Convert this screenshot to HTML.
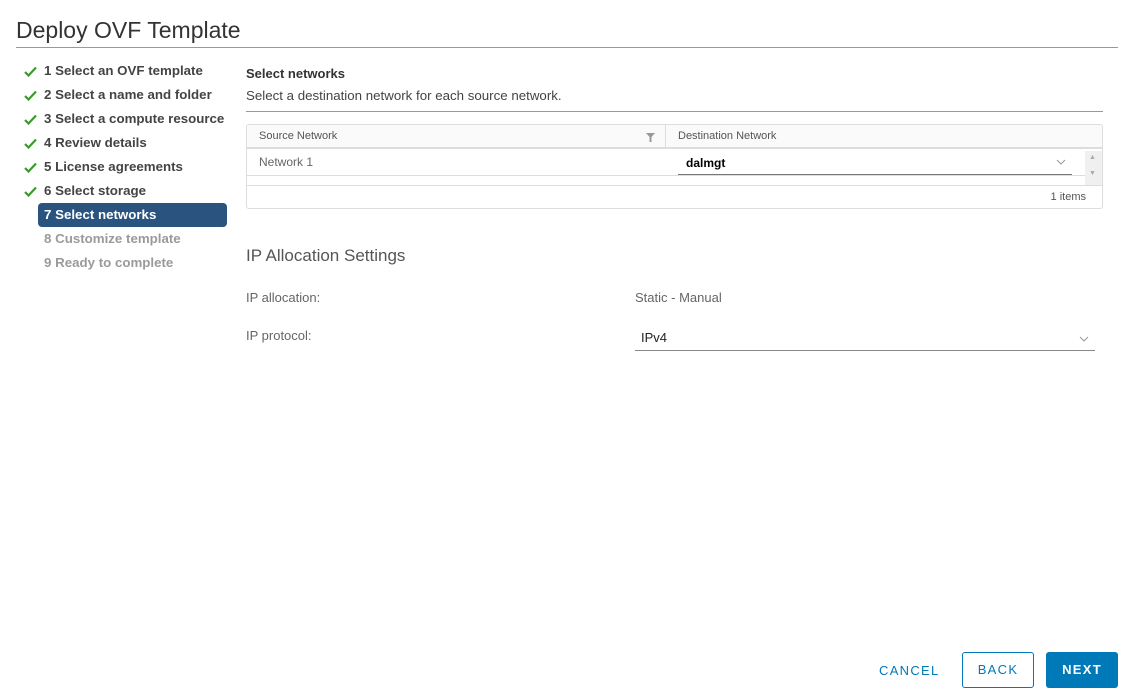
<!DOCTYPE html>
<html><head><meta charset="utf-8"><style>
*{margin:0;padding:0;box-sizing:border-box}
body{width:1128px;height:697px;background:#fff;font-family:"Liberation Sans",sans-serif;color:#333;position:relative;overflow:hidden}
.a{position:absolute;white-space:nowrap}
.step{position:absolute;left:44px;font-size:13.3px;font-weight:bold;color:#444}
.chk{position:absolute;left:24px}
.dim{color:#9a9a9a}
.sm{font-size:12px;color:#666}
</style></head><body>
<div class="a" style="left:16px;top:17px;font-size:23px;color:#333">Deploy OVF Template</div>
<div class="a" style="left:16px;top:47px;width:1102px;height:1px;background:#999"></div>

<svg class="chk" style="top:66px" width="13" height="11" viewBox="0 0 13 11"><path d="M1 6l3.5 3.5L12 1.5" stroke="#3a9a2a" stroke-width="2.2" fill="none"/></svg>
<svg class="chk" style="top:90px" width="13" height="11" viewBox="0 0 13 11"><path d="M1 6l3.5 3.5L12 1.5" stroke="#3a9a2a" stroke-width="2.2" fill="none"/></svg>
<svg class="chk" style="top:114px" width="13" height="11" viewBox="0 0 13 11"><path d="M1 6l3.5 3.5L12 1.5" stroke="#3a9a2a" stroke-width="2.2" fill="none"/></svg>
<svg class="chk" style="top:138px" width="13" height="11" viewBox="0 0 13 11"><path d="M1 6l3.5 3.5L12 1.5" stroke="#3a9a2a" stroke-width="2.2" fill="none"/></svg>
<svg class="chk" style="top:162px" width="13" height="11" viewBox="0 0 13 11"><path d="M1 6l3.5 3.5L12 1.5" stroke="#3a9a2a" stroke-width="2.2" fill="none"/></svg>
<svg class="chk" style="top:186px" width="13" height="11" viewBox="0 0 13 11"><path d="M1 6l3.5 3.5L12 1.5" stroke="#3a9a2a" stroke-width="2.2" fill="none"/></svg>
<div class="step" style="top:63px">1 Select an OVF template</div>
<div class="step" style="top:87px">2 Select a name and folder</div>
<div class="step" style="top:111px">3 Select a compute resource</div>
<div class="step" style="top:135px">4 Review details</div>
<div class="step" style="top:159px">5 License agreements</div>
<div class="step" style="top:183px">6 Select storage</div>
<div class="a" style="left:38px;top:203px;width:189px;height:24px;background:#2a547f;border-radius:4px"></div>
<div class="step" style="top:207px;color:#fff">7 Select networks</div>
<div class="step dim" style="top:231px">8 Customize template</div>
<div class="step dim" style="top:255px">9 Ready to complete</div>

<div class="a" style="left:246px;top:66px;font-size:13px;font-weight:bold;color:#333">Select networks</div>
<div class="a" style="left:246px;top:88px;font-size:13.3px;color:#444">Select a destination network for each source network.</div>
<div class="a" style="left:246px;top:111px;width:857px;height:1px;background:#999"></div>

<div class="a" style="left:246px;top:124px;width:857px;height:85px;border:1px solid #ddd;border-radius:3px;overflow:hidden">
 <div class="a" style="left:0;top:0;width:857px;height:24px;background:#fafafa;border-bottom:2px solid #ddd"></div>
 <div class="a" style="left:418px;top:0;width:1px;height:24px;background:#ddd"></div>
 <div class="a sm" style="left:12px;top:5px;font-size:11px;color:#555">Source Network</div>
 <svg class="a" style="left:399px;top:8px" width="9" height="9" viewBox="0 0 9 9"><path d="M0 0h9L5.5 4v5h-2V4z" fill="#999"/></svg>
 <div class="a sm" style="left:431px;top:5px;font-size:11px;color:#555">Destination Network</div>
 <div class="a sm" style="left:12px;top:30px">Network 1</div>
 <div class="a" style="left:0;top:50px;width:838px;height:1px;background:#ddd"></div>
 <div class="a" style="left:0;top:60px;width:857px;height:1px;background:#ddd"></div>
 <div class="a" style="left:439px;top:31px;font-size:12px;font-weight:bold;color:#000">dalmgt</div>
 <div class="a" style="left:431px;top:49px;width:394px;height:1px;background:#777"></div>
 <svg class="a" style="left:809px;top:34px" width="10" height="6" viewBox="0 0 10 6"><path d="M1 1l4 4 4-4" stroke="#999" fill="none"/></svg>
 <div class="a" style="left:838px;top:26px;width:17px;height:34px;background:#f0f0f0"></div>
 <div class="a" style="left:842px;top:29px;font-size:7px;color:#aaa">▲</div>
 <div class="a" style="left:842px;top:45px;font-size:7px;color:#aaa">▼</div>
 <div class="a" style="right:16px;top:66px;font-size:11px;color:#555">1 items</div>
</div>

<div class="a" style="left:246px;top:246px;font-size:17px;color:#555">IP Allocation Settings</div>
<div class="a sm" style="left:246px;top:290px;font-size:13px">IP allocation:</div>
<div class="a sm" style="left:635px;top:290px;font-size:13px">Static - Manual</div>
<div class="a sm" style="left:246px;top:328px;font-size:13px">IP protocol:</div>
<div class="a" style="left:641px;top:330px;font-size:13px;color:#222">IPv4</div>
<svg class="a" style="left:1079px;top:336px" width="10" height="6" viewBox="0 0 10 6"><path d="M1 1l4 4 4-4" stroke="#999" fill="none"/></svg>
<div class="a" style="left:635px;top:350px;width:460px;height:1px;background:#888"></div>

<div class="a" style="left:879px;top:663px;font-size:13px;letter-spacing:1.3px;color:#0079b8">CANCEL</div>
<div class="a" style="left:962px;top:652px;width:72px;height:36px;border:1px solid #0079b8;border-radius:3px;font-size:13px;letter-spacing:1.3px;color:#0079b8;text-align:center;line-height:34px">BACK</div>
<div class="a" style="left:1046px;top:652px;width:72px;height:36px;background:#0079b8;border-radius:3px;font-size:13px;font-weight:bold;letter-spacing:1.3px;color:#fff;text-align:center;line-height:36px">NEXT</div>
</body></html>
